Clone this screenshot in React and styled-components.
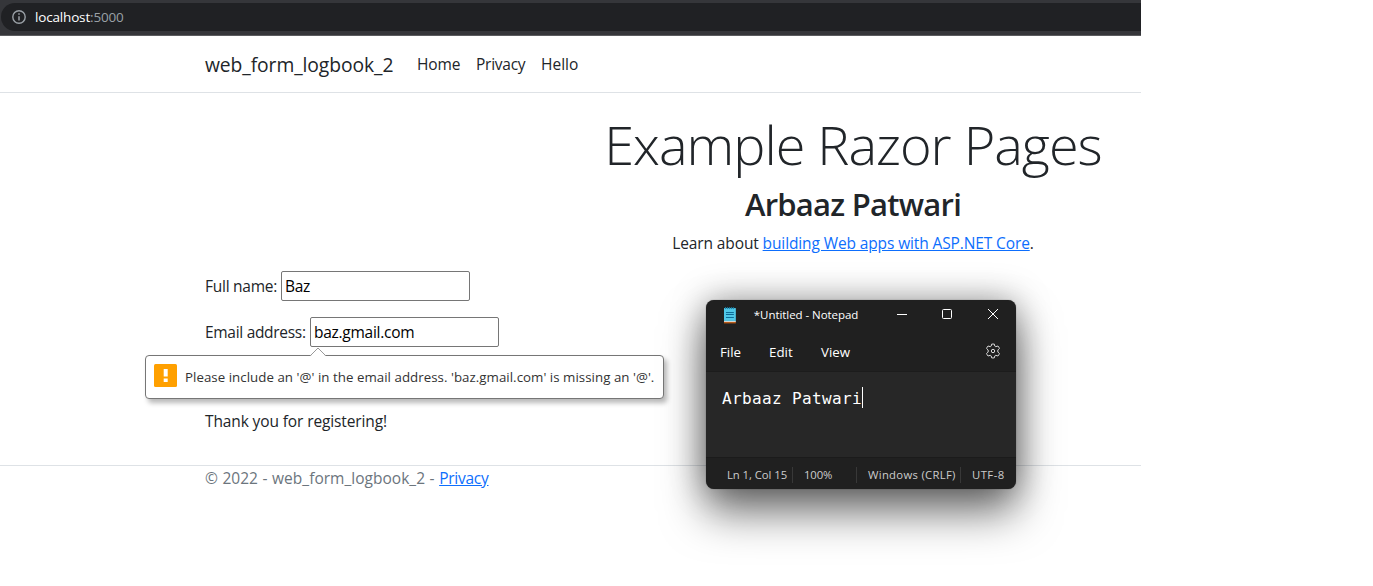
import React from "react";
import styled, { createGlobalStyle } from "styled-components";

const Global = createGlobalStyle`
  * { box-sizing: border-box; }
  body {
    margin: 0;
    background: #fff;
    color: #212529;
    font-family: "Open Sans", "Noto Sans", sans-serif;
    font-size: 15.5px;
    font-weight: 400;
    line-height: 24px;
  }
`;

const Screen = styled.div`
  position: relative;
  width: 1373px;
  height: 586px;
  overflow: hidden;
`;

const Browser = styled.div`
  width: 1141px;
  height: 586px;
  overflow: hidden;
`;

const AddressBar = styled.div`
  height: 36px;
  padding: 3px 0 4px 1px;
  background: #35363a;
  border-bottom: 1px solid #5b5c5f;
`;

const Omnibox = styled.div`
  display: flex;
  align-items: center;
  height: 28px;
  padding-left: 11px;
  border-radius: 14px 0 0 14px;
  background: #202124;
  color: #9aa0a6;
  font-size: 13.5px;
  line-height: 20px;
`;

const Address = styled.div`
  margin-left: 9px;
  letter-spacing: -0.17px;
`;

const Host = styled.span`
  color: #fff;
  font-weight: 500;
`;

const Tracked = styled.span`
  letter-spacing: ${(p) => p.$ls}px;
`;

const Container = styled.div`
  width: 1320px;
  margin-left: 193px;
  padding: 0 12px;
`;

const Header = styled.header`
  height: 57px;
  border-bottom: 1px solid #dee2e6;
`;

const Nav = styled(Container)`
  display: flex;
  align-items: center;
  height: 56px;
  padding-top: 1px;
`;

const Brand = styled.span`
  width: 188px;
  margin-right: 24px;
  font-size: 19.3px;
  line-height: 30px;
  letter-spacing: ${(p) => p.$ls}px;
  white-space: nowrap;
`;

const NavLink = styled.span`
  width: ${(p) => p.$w}px;
  margin: -2px 16px 0 0;
  letter-spacing: ${(p) => p.$ls || 0}px;
  white-space: nowrap;
`;

const Hero = styled.div`
  padding-top: 18px;
  text-align: center;
`;

const Display = styled.h1`
  margin: 0 0 7px;
  font-size: 54px;
  font-weight: 300;
  line-height: 67px;
  letter-spacing: -1px;
`;

const Subtitle = styled.h2`
  margin: 0 0 8px;
  font-size: 31px;
  font-weight: 600;
  line-height: 38px;
  letter-spacing: -0.75px;
`;

const Lead = styled.p`
  margin: 0 0 16px;
  letter-spacing: -0.12px;
`;

const Link = styled.a`
  color: #0d6efd;
  text-decoration: underline;
`;

const Field = styled.div`
  display: flex;
  align-items: center;
  height: 30px;
  margin-bottom: 16px;
`;

const Label = styled.label`
  width: ${(p) => p.$w}px;
  letter-spacing: ${(p) => p.$ls}px;
  white-space: nowrap;
`;

const Input = styled.div`
  width: 189px;
  height: 30px;
  padding: 2px 3px;
  border: 1px solid #767676;
  border-radius: 2px;
  color: #000;
  letter-spacing: -0.27px;
`;

const Message = styled.p`
  margin: 62px 0 0;
  letter-spacing: -0.12px;
`;

const Footer = styled.footer`
  margin-top: 32px;
  border-top: 1px solid #dee2e6;
  color: #6c757d;
  letter-spacing: 0.02px;
  word-spacing: 0.5px;
`;

const Bubble = styled.div`
  position: absolute;
  left: 145px;
  top: 355px;
  display: flex;
  align-items: center;
  width: 519px;
  height: 44px;
  padding: 0 8px;
  border: 1px solid #767676;
  border-radius: 4px;
  background: #fff;
  box-shadow: 3px 4px 5px rgba(0, 0, 0, 0.28);
  color: #333;
  font-size: 13.3px;
  letter-spacing: 0.035px;
  white-space: nowrap;
`;

const BubbleArrow = styled.svg`
  position: absolute;
  left: 163px;
  top: -9px;
`;

const Warning = styled.svg`
  flex: none;
  margin: -3px 8px 0 0;
`;

const Notepad = styled.section`
  position: absolute;
  left: 706px;
  top: 300px;
  width: 310px;
  height: 189px;
  border-radius: 8px;
  box-shadow: 0 0 1px rgba(0, 0, 0, 0.6), 0 24px 44px 0 rgba(0, 0, 0, 0.52), 0 0 34px rgba(0, 0, 0, 0.36);
  background: #202020;
  color: #fff;
`;

const TitleBar = styled.div`
  display: flex;
  align-items: center;
  height: 30px;
  padding: 0 17px 0 17px;
  font-size: 11.5px;
  letter-spacing: -0.06px;
`;

const Title = styled.span`
  width: 143px;
  margin-left: 17px;
  white-space: nowrap;
`;

const WindowButtons = styled.div`
  display: flex;
  gap: 33px;
  margin: -2px 0 0 1px;
`;

const MenuBar = styled.div`
  display: flex;
  align-items: center;
  height: 41px;
  padding: 3px 15px 0 14px;
  font-size: 13.3px;
`;

const MenuItem = styled.span`
  width: ${(p) => p.$w}px;
`;

const Gear = styled.svg`
  margin: -3px 0 0 auto;
`;

const Editor = styled.div`
  display: flex;
  height: 86px;
  padding: 15px 16px;
  border-top: 1px solid #1c1c1c;
  background: #272727;
  font: 16px/24px "DejaVu Sans Mono", monospace;
  letter-spacing: 0.37px;
`;

const Caret = styled.span`
  width: 1px;
  height: 21px;
  background: #fff;
`;

const StatusBar = styled.div`
  display: flex;
  align-items: center;
  height: 32px;
  padding: 3px 0 0 21px;
  border-top: 1px solid #1b1b1b;
  color: #ccc;
  font-size: 11.3px;
  line-height: 16px;
`;

const Status = styled.span`
  width: ${(p) => p.$w}px;
  margin-right: 11px;
  border-right: ${(p) => (p.$last ? 0 : 1)}px solid #383838;
  letter-spacing: ${(p) => p.$ls || 0}px;
  white-space: nowrap;
`;

export default function App() {
  return (
    <Screen>
      <Global />
      <Browser>
        <AddressBar>
          <Omnibox>
            <svg width="14" height="14" viewBox="0 0 14 14">
              <circle cx="7" cy="7" r="6.2" fill="none" stroke="#9aa0a6" strokeWidth="1.4" />
              <path d="M7 3.2v1.6M7 6.2v4.4" stroke="#9aa0a6" strokeWidth="1.5" />
            </svg>
            <Address><Host>localhost</Host>:5000</Address>
          </Omnibox>
        </AddressBar>
        <Header>
          <Nav>
            <Brand $ls={-0.08}>web_form_logbook_2</Brand>
            <NavLink $w={43} $ls={-0.15}>Home</NavLink>
            <NavLink $w={49} $ls={-0.25}>Privacy</NavLink>
            <NavLink $w={38}>Hello</NavLink>
          </Nav>
        </Header>
        <Container as="main">
          <Hero>
            <Display>Example Razor Pages</Display>
            <Subtitle>Arbaaz Patwari</Subtitle>
            <Lead>Learn about <Link>building Web apps with ASP.NET Core</Link>.</Lead>
          </Hero>
          <Field>
            <Label $w={76} $ls={-0.25}>Full name:</Label>
            <Input>Baz</Input>
          </Field>
          <Field>
            <Label $w={105} $ls={-0.3}>Email address:</Label>
            <Input>baz.gmail.com</Input>
          </Field>
          <Message>Thank you for registering!</Message>
        </Container>
        <Footer>
          <Container>© 2022 - web_form_logbook_2 - <Tracked $ls={-0.25}><Link>Privacy</Link></Tracked></Container>
        </Footer>
      </Browser>
      <Bubble>
        <BubbleArrow width="18" height="10" viewBox="0 0 18 10">
          <path d="M1 9.5L9 1L17 9.5V10H1Z" fill="#fff" />
          <path d="M1 9L9 1L17 9" fill="none" stroke="#999" />
        </BubbleArrow>
        <Warning width="23" height="23" viewBox="0 0 23 23">
          <rect width="23" height="23" rx="1.5" fill="#ffa000" />
          <path d="M9.7 5h4v7.5h-4zM9.7 14.500h4v3.500h-4z" fill="#fff" />
        </Warning>
        <span>Please include an '@' in the email address. 'baz.gmail.com' is missing an '@'.</span>
      </Bubble>
      <Notepad>
        <TitleBar>
          <svg width="14" height="17" viewBox="0 0 14 17">
            <path d="M1 1h12v13H1z" fill="#50c8e8" />
            <path d="M2.500 0v2M4.500 0v2M6.500 0v2M8.500 0v2M10.500 0v2" stroke="#1681a8" />
            <path d="M3 5.500h8M3 7.500h8M3 10.500h8" stroke="#0c6a94" />
            <path d="M1 14h12v1H1z" fill="#e8f4f6" />
            <path d="M1 15h12v1.500H1z" fill="#b85a18" />
          </svg>
          <Title>*Untitled - Notepad</Title>
          <WindowButtons>
            <svg width="12" height="12"><path d="M1 6.500h10" stroke="#fff" /></svg>
            <svg width="12" height="12"><rect x="1.500" y="1.500" width="9" height="9" rx="1" fill="none" stroke="#fff" /></svg>
            <svg width="13" height="12"><path d="M2 1l10 10M12 1L2 11" stroke="#fff" /></svg>
          </WindowButtons>
        </TitleBar>
        <MenuBar>
          <MenuItem $w={49}>File</MenuItem>
          <MenuItem $w={52}>Edit</MenuItem>
          <MenuItem $w={40}>View</MenuItem>
          <Gear width="16" height="16" viewBox="0 0 16 16" fill="none" stroke="#ddd" strokeLinejoin="round">
            <path d="M6.600 1.200Q8 .8 9.400 1.200L9.800 3.100Q10.200 3.700 11 3.600L12.900 3Q14 4.100 14.400 5.500L13 6.900Q12.400 8 13 9.100L14.400 10.500Q14 11.900 12.900 13L11 12.400Q10.200 12.300 9.800 12.900L9.400 14.800Q8 15.200 6.600 14.800L6.200 12.900Q5.800 12.300 5 12.400L3.100 13Q2 11.900 1.600 10.500L3 9.100Q3.600 8 3 6.900L1.600 5.500Q2 4.100 3.100 3L5 3.600Q5.800 3.700 6.200 3.100Z" />
            <circle cx="8" cy="8" r="1.700" />
          </Gear>
        </MenuBar>
        <Editor>Arbaaz Patwari<Caret /></Editor>
        <StatusBar>
          <Status $w={66} $ls={-0.05}>Ln 1, Col 15</Status>
          <Status $w={53} $ls={-0.1}>100%</Status>
          <Status $w={93} $ls={0.3}>Windows (CRLF)</Status>
          <Status $last $ls={0.45}>UTF-8</Status>
        </StatusBar>
      </Notepad>
    </Screen>
  );
}
